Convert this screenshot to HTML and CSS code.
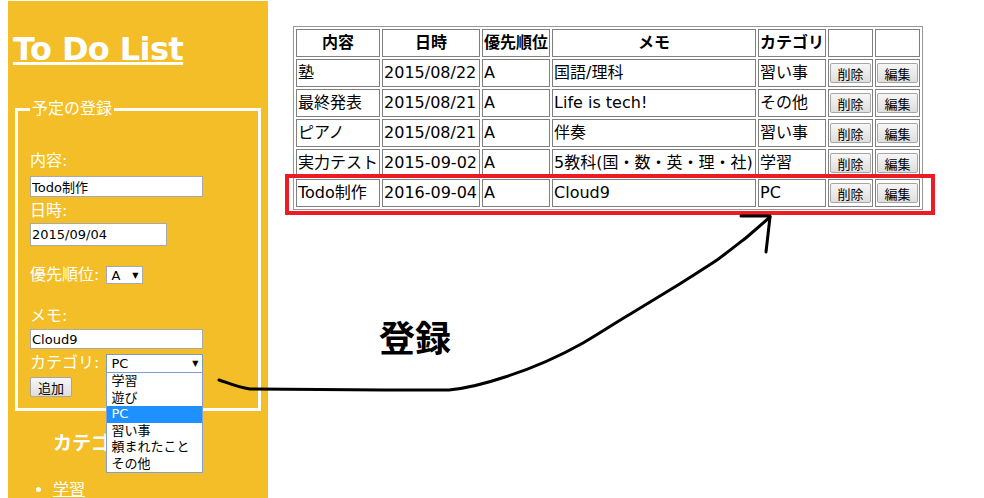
FILE: index.html
```html
<!DOCTYPE html>
<html lang="ja">
<head>
    <meta charset="UTF-8">
    <meta name="viewport" content="width=device-width, initial-scale=1.0">
    <title>To Do List</title>
    <link rel="stylesheet" href="styles.css">
</head>
<body>
    <div class="page">
        <aside class="sidebar">
            <h1 class="title"><a href="#">To Do List</a></h1>

            <fieldset class="entry">
                <legend>予定の登録</legend>
                <div class="label first">内容:</div>
                <input class="field" type="text" value="Todo制作">
                <div class="label when">日時:</div>
                <input class="field date" type="text" value="2015/09/04">

                <div class="row priority">
                    <span class="label">優先順位:</span>
                    <div class="select small"><span>A</span><span class="caret">▼</span></div>
                </div>

                <div class="label memo">メモ:</div>
                <input class="field memo-field" type="text" value="Cloud9">

                <div class="row category">
                    <span class="label">カテゴリ:</span>
                    <div class="select wide">
                        <span>PC</span><span class="caret">▼</span>
                        <!-- 開いているドロップダウン -->
                        <ul class="options">
                            <li>学習</li>
                            <li>遊び</li>
                            <li class="selected">PC</li>
                            <li>習い事</li>
                            <li>頼まれたこと</li>
                            <li>その他</li>
                        </ul>
                    </div>
                </div>
                <button class="add">追加</button>
            </fieldset>

            <div class="categories">
                <h3>カテゴリ</h3>
                <ul>
                    <li><a href="#">学習</a></li>
                    <li><a href="#">遊び</a></li>
                    <li><a href="#">PC</a></li>
                </ul>
            </div>
        </aside>

        <main class="content">
            <table class="todo">
                <tr>
                    <th class="c-name">内容</th>
                    <th class="c-date">日時</th>
                    <th class="c-pri">優先順位</th>
                    <th class="c-memo">メモ</th>
                    <th class="c-cat">カテゴリ</th>
                    <th class="c-btn"></th>
                    <th class="c-btn"></th>
                </tr>
                <tr>
                    <td>塾</td><td>2015/08/22</td><td>A</td><td>国語/理科</td><td>習い事</td>
                    <td><button class="cell-btn">削除</button></td><td><button class="cell-btn">編集</button></td>
                </tr>
                <tr>
                    <td>最終発表</td><td>2015/08/21</td><td>A</td><td>Life is tech!</td><td>その他</td>
                    <td><button class="cell-btn">削除</button></td><td><button class="cell-btn">編集</button></td>
                </tr>
                <tr>
                    <td>ピアノ</td><td>2015/08/21</td><td>A</td><td>伴奏</td><td>習い事</td>
                    <td><button class="cell-btn">削除</button></td><td><button class="cell-btn">編集</button></td>
                </tr>
                <tr>
                    <td>実力テスト</td><td>2015-09-02</td><td>A</td><td>5教科(国・数・英・理・社)</td><td>学習</td>
                    <td><button class="cell-btn">削除</button></td><td><button class="cell-btn">編集</button></td>
                </tr>
                <tr>
                    <td>Todo制作</td><td>2016-09-04</td><td>A</td><td>Cloud9</td><td>PC</td>
                    <td><button class="cell-btn">削除</button></td><td><button class="cell-btn">編集</button></td>
                </tr>
            </table>
        </main>
    </div>

    <!-- 注釈: 赤枠・矢印・文字 -->
    <div class="mark"></div>
    <div class="note">登録</div>
    <svg class="arrow" width="984" height="498" viewBox="0 0 984 498">
        <path d="M219,380 C226,382 236,387 250,389 L384,390 L449,390 C470,388 487,383 505,377 C530,369 560,356 583,343 C600,333 615,323 632,313 C650,302 665,293 678,285 C692,276 705,268 717,260 C728,252 738,244 747,237 C755,230 763,223 770,217" />
        <path d="M741,216 L770,216 M770,217 L766,252" />
    </svg>
</body>
</html>
```

FILE: styles.css
```css
body {
    margin: 0;
    padding-top: 1px;
    font-family: "DejaVu Sans", "Noto Sans CJK JP", sans-serif;
    color: #000;
    background-color: #fff;
}

.page {
    display: flex;
    align-items: flex-start;
    padding-left: 8px;
}

/* 左のサイドバー */
.sidebar {
    width: 260px;
    flex-shrink: 0;
    min-height: 520px;
    padding-bottom: 30px;
    background-color: #f3be27;
    color: #fff;
}

.title {
    margin: 28px 0 0 5px;
    font-size: 32px;
    line-height: 40px;
    font-weight: bold;
    letter-spacing: -0.6px;
}

.title a {
    color: #fff;
}

.entry {
    margin: 28px 7px 0;
    border: 3px solid #fff;
    padding: 0 12px 11px;
    min-width: 0;
}

.entry legend {
    padding: 0 2px;
    font-size: 16px;
    line-height: 24px;
}

.label {
    display: block;
    font-size: 16px;
    line-height: 24px;
}

.label.first {
    margin-top: 28px;
}

.label.when {
    margin-top: 2px;
}

.label.memo {
    margin-top: 17px;
}

.field {
    display: block;
    box-sizing: border-box;
    width: 173px;
    height: 21px;
    margin: 3px 0 0;
    padding: 0 1px;
    border: 1px solid #a9a9a9;
    background-color: #fff;
    color: #000;
    font-family: "DejaVu Sans", "Noto Sans CJK JP", sans-serif;
    font-size: 13px;
}

.field.date {
    width: 137px;
    height: 23px;
    margin-top: 0;
}

.field.memo-field {
    height: 20px;
    margin-top: 1px;
}

.row {
    display: flex;
    align-items: flex-start;
    gap: 7px;
}

.row.priority {
    margin-top: 17px;
}

.row.category {
    margin-top: 2px;
}

.select {
    position: relative;
    box-sizing: border-box;
    display: flex;
    align-items: center;
    justify-content: space-between;
    margin-top: 3px;
    padding: 0 4px;
    border: 1px solid #a9a9a9;
    background-color: #fff;
    color: #000;
    font-size: 13px;
}

.select.small {
    width: 37px;
    height: 18px;
}

.select.wide {
    width: 97px;
    height: 19px;
    border-color: #7b9ebd;
}

.caret {
    font-size: 8px;
}

.options {
    position: absolute;
    top: 100%;
    left: -1px;
    z-index: 2;
    box-sizing: border-box;
    width: 97px;
    margin: 0;
    padding: 0;
    list-style: none;
    border: 1px solid #7f9fd6;
    background-color: #fff;
}

.options li {
    padding-left: 4px;
    font-size: 13px;
    line-height: 16.5px;
    color: #000;
}

.options li.selected {
    background-color: #1e90ff;
    color: #fff;
}

.add {
    display: block;
    width: 42px;
    height: 20px;
    margin-top: 2px;
    padding: 0;
    border: 1px solid #a6a6a6;
    border-radius: 2px;
    background: linear-gradient(#f6f6f6, #dedede);
    color: #000;
    font-family: "DejaVu Sans", "Noto Sans CJK JP", sans-serif;
    font-size: 13px;
}

.categories h3 {
    margin: 20px 0 0 45px;
    font-size: 19px;
    line-height: 24px;
    font-weight: bold;
}

.categories ul {
    margin: 23px 0 0;
    padding-left: 45px;
}

.categories li {
    font-size: 16px;
    line-height: 24px;
}

.categories a {
    color: #fff;
}

/* 右の一覧表 */
.content {
    padding: 25px 0 0 25px;
}

.todo {
    border: 1px solid #999;
    border-spacing: 2px;
    font-size: 16px;
}

.todo th,
.todo td {
    border: 1px solid #808080;
    padding: 1px;
    line-height: 24px;
    white-space: nowrap;
    text-align: left;
}

.todo th {
    text-align: center;
    font-weight: bold;
}

.c-name { width: 80px; }
.c-date { width: 94px; }
.c-pri  { width: 64px; }
.c-memo { width: 200px; }
.c-cat  { width: 64px; }
.c-btn  { width: 41px; }

.cell-btn {
    display: block;
    width: 41px;
    height: 20px;
    margin: 2px 0;
    padding: 0;
    border: 1px solid #a6a6a6;
    border-radius: 2px;
    background: linear-gradient(#f6f6f6, #dedede);
    color: #000;
    font-family: "DejaVu Sans", "Noto Sans CJK JP", sans-serif;
    font-size: 13px;
}

/* 注釈 */
.mark {
    position: absolute;
    left: 285px;
    top: 174px;
    box-sizing: border-box;
    width: 650px;
    height: 41px;
    border: 4px solid #ed1c24;
}

.note {
    position: absolute;
    left: 379px;
    top: 318px;
    font-family: "Noto Sans CJK JP", sans-serif;
    font-size: 36px;
    line-height: 36px;
    font-weight: bold;
}

.arrow {
    position: absolute;
    left: 0;
    top: 0;
    pointer-events: none;
}

.arrow path {
    fill: none;
    stroke: #000;
    stroke-width: 3;
    stroke-linecap: round;
    stroke-linejoin: round;
}
```
